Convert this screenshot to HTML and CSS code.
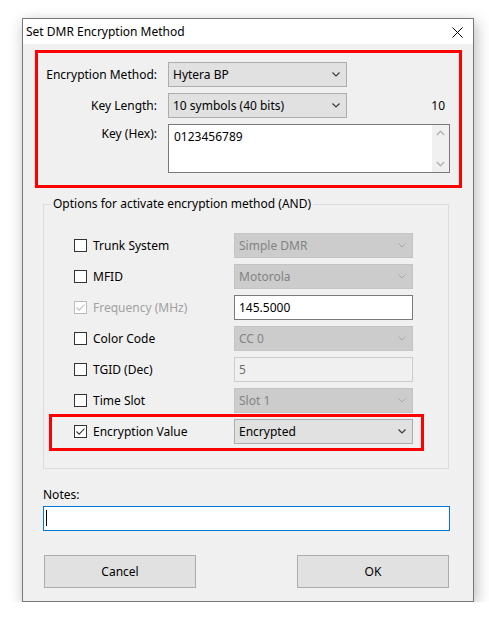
FILE: index.html
```html
<!DOCTYPE html>
<html>
<head>
<meta charset="utf-8">
<title>Set DMR Encryption Method</title>
<link rel="stylesheet" href="styles.css">
</head>
<body>
<div class="window">
  <div class="titlebar">
    <span class="title">Set DMR Encryption Method</span>
    <svg class="close" width="11" height="11" viewBox="0 0 11 11"><path d="M0.5 0.5 L10.5 10.5 M10.5 0.5 L0.5 10.5" stroke="#000" stroke-width="1" fill="none"/></svg>
  </div>
  <div class="content">
    <div class="method-box">
      <div class="lbl">Encryption Method:</div>
      <div class="combo"><span>Hytera BP</span><svg class="chev" width="8" height="5" viewBox="0 0 8 5"><polyline points="0.5,0.5 4,4 7.5,0.5" fill="none" stroke="#3c3c3c" stroke-width="1.2"/></svg></div>
      <div></div>
      <div class="lbl">Key Length:</div>
      <div class="combo"><span>10 symbols (40 bits)</span><svg class="chev" width="8" height="5" viewBox="0 0 8 5"><polyline points="0.5,0.5 4,4 7.5,0.5" fill="none" stroke="#3c3c3c" stroke-width="1.2"/></svg></div>
      <div class="count">10</div>
      <div class="lbl lbl-top">Key (Hex):</div>
      <div class="textarea">
        <span class="ta-text">0123456789</span>
        <div class="vscroll">
          <svg width="9" height="6" viewBox="0 0 9 6"><polyline points="0.8,5 4.5,1.3 8.2,5" fill="none" stroke="#b4b4b4" stroke-width="1.5"/></svg>
          <svg width="9" height="6" viewBox="0 0 9 6"><polyline points="0.8,1 4.5,4.7 8.2,1" fill="none" stroke="#b4b4b4" stroke-width="1.5"/></svg>
        </div>
      </div>
    </div>

    <fieldset class="group">
      <legend>Options for activate encryption method (AND)</legend>
      <div class="rows">
        <div class="row">
          <label class="check"><span class="box"></span>Trunk System</label>
          <div class="combo disabled"><span>Simple DMR</span><svg class="chev" width="8" height="5" viewBox="0 0 8 5"><polyline points="0.5,0.5 4,4 7.5,0.5" fill="none" stroke="#a8a8a8" stroke-width="1"/></svg></div>
        </div>
        <div class="row">
          <label class="check"><span class="box"></span>MFID</label>
          <div class="combo disabled"><span>Motorola</span><svg class="chev" width="8" height="5" viewBox="0 0 8 5"><polyline points="0.5,0.5 4,4 7.5,0.5" fill="none" stroke="#a8a8a8" stroke-width="1"/></svg></div>
        </div>
        <div class="row">
          <label class="check check-disabled"><span class="box"><svg width="11" height="11" viewBox="0 0 11 11"><polyline points="1.5,5.5 4.2,8.2 9.5,2.5" fill="none" stroke="#bcbcbc" stroke-width="1.1"/></svg></span>Frequency (MHz)</label>
          <div class="field">145.5000</div>
        </div>
        <div class="row">
          <label class="check"><span class="box"></span>Color Code</label>
          <div class="combo disabled"><span>CC 0</span><svg class="chev" width="8" height="5" viewBox="0 0 8 5"><polyline points="0.5,0.5 4,4 7.5,0.5" fill="none" stroke="#a8a8a8" stroke-width="1"/></svg></div>
        </div>
        <div class="row">
          <label class="check"><span class="box"></span>TGID (Dec)</label>
          <div class="field field-disabled">5</div>
        </div>
        <div class="row">
          <label class="check"><span class="box"></span>Time Slot</label>
          <div class="combo disabled"><span>Slot 1</span><svg class="chev" width="8" height="5" viewBox="0 0 8 5"><polyline points="0.5,0.5 4,4 7.5,0.5" fill="none" stroke="#a8a8a8" stroke-width="1"/></svg></div>
        </div>
        <div class="row row-marked">
          <label class="check"><span class="box"><svg width="11" height="11" viewBox="0 0 11 11"><polyline points="1.5,5.5 4.2,8.2 9.5,2.5" fill="none" stroke="#333" stroke-width="1.1"/></svg></span>Encryption Value</label>
          <div class="combo"><span>Encrypted</span><svg class="chev" width="8" height="5" viewBox="0 0 8 5"><polyline points="0.5,0.5 4,4 7.5,0.5" fill="none" stroke="#3c3c3c" stroke-width="1.2"/></svg></div>
        </div>
      </div>
    </fieldset>

    <div class="notes">
      <div class="notes-label">Notes:</div>
      <div class="notes-input"><span class="caret"></span></div>
    </div>

    <div class="buttons">
      <div class="btn">Cancel</div>
      <div class="btn">OK</div>
    </div>
  </div>
</div>
</body>
</html>
```

FILE: styles.css
```css
*, *::before, *::after { box-sizing: border-box; }

html, body {
  margin: 0;
  padding: 0;
  background: #ffffff;
}

body {
  font-family: "Segoe UI", "Noto Sans", "DejaVu Sans", sans-serif;
  font-size: 12px;
  color: #000;
}

.window {
  margin: 18px 0 0 22px;
  width: 452px;
  height: 584px;
  border: 1px solid #777777;
  background: #f0f0f0;
  box-shadow: 2px 4px 14px rgba(0, 0, 0, 0.28);
  display: flex;
  flex-direction: column;
}

.titlebar {
  height: 25px;
  background: #ffffff;
  display: flex;
  align-items: center;
  justify-content: space-between;
  padding: 0 10px 0 3px;
}

.title {
  line-height: 25px;
}

.close {
  display: block;
  margin-top: 2px;
}

.content {
  display: flex;
  flex-direction: column;
}

/* top section with red annotation frame */
.method-box {
  margin: 6px 0 0 12px;
  width: 427px;
  border: 3px solid #ff0000;
  padding: 9px 9px 12px 0;
  display: grid;
  grid-template-columns: 130px 179px 103px;
  grid-template-rows: 25px 25px 49px;
  row-gap: 6px;
}

.lbl {
  padding-right: 11px;
  text-align: right;
  align-self: center;
  line-height: 16px;
}

.lbl-top {
  align-self: start;
  margin-top: 2px;
}

.count {
  align-self: center;
  text-align: right;
  padding-right: 5px;
  line-height: 16px;
}

.combo {
  height: 25px;
  background: #e1e1e1;
  border: 1px solid #adadad;
  display: flex;
  align-items: center;
  justify-content: space-between;
  padding: 0 6px 0 4px;
  line-height: 16px;
}

.combo span {
  padding-top: 1px;
}

.chev {
  display: block;
}

.combo.disabled {
  background: #cccccc;
  border-color: #c4c4c4;
  color: #838383;
}

.textarea {
  grid-column: 2 / 4;
  height: 49px;
  background: #ffffff;
  border: 1px solid #7a7a7a;
  display: flex;
  justify-content: space-between;
}

.ta-text {
  padding: 4px 0 0 5px;
  line-height: 16px;
}

.vscroll {
  width: 17px;
  background: #f0f0f0;
  display: flex;
  flex-direction: column;
  justify-content: space-between;
  align-items: center;
  padding: 5px 0 5px 0;
}

.vscroll svg {
  display: block;
}

/* options group */
.group {
  margin: 8px 0 0 20px;
  width: 406px;
  border: 1px solid #dcdcdc;
  padding: 0 0 24px 0;
  min-width: 0;
}

.group legend {
  margin-left: 7px;
  padding: 0 2px;
  line-height: 16px;
}

.rows {
  display: flex;
  flex-direction: column;
  gap: 6px;
  padding: 21px 0 0 30px;
}

.row {
  display: grid;
  grid-template-columns: 160px 179px;
  height: 25px;
  align-items: center;
}

.row-marked {
  position: relative;
}

.row-marked::after {
  content: "";
  position: absolute;
  left: -25px;
  top: -5px;
  width: 375px;
  height: 37px;
  border: 3px solid #ff0000;
  pointer-events: none;
}

.check {
  display: flex;
  align-items: center;
  gap: 6px;
  line-height: 16px;
}

.box {
  width: 13px;
  height: 13px;
  border: 1px solid #333333;
  background: #ffffff;
  display: flex;
  align-items: center;
  justify-content: center;
  flex: none;
}

.box svg {
  display: block;
}

.check-disabled {
  color: #a0a0a0;
}

.check-disabled .box {
  border-color: #bcbcbc;
}

.field {
  height: 25px;
  background: #ffffff;
  border: 1px solid #7a7a7a;
  padding: 0 4px;
  line-height: 23px;
}

.field-disabled {
  background: #f0f0f0;
  border-color: #cccccc;
  color: #6d6d6d;
}

/* notes */
.notes {
  margin: 18px 0 0 20px;
  width: 407px;
}

.notes-label {
  line-height: 16px;
}

.notes-input {
  margin-top: 3px;
  height: 25px;
  background: #ffffff;
  border: 1px solid #0078d7;
  padding: 3px 0 0 2px;
}

.caret {
  display: block;
  width: 1px;
  height: 16px;
  background: #000;
}

/* buttons */
.buttons {
  margin: 24px 0 0 21px;
  width: 405px;
  display: flex;
  justify-content: space-between;
}

.btn {
  width: 152px;
  height: 33px;
  background: #e1e1e1;
  border: 1px solid #adadad;
  display: flex;
  align-items: center;
  justify-content: center;
  line-height: 16px;
}
```
